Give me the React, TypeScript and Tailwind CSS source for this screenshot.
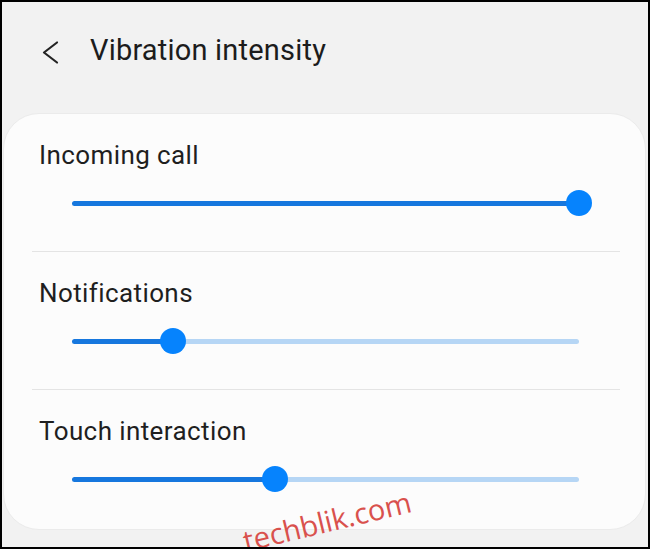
import React from 'react';

interface IntensityRow {
  label: string;
  value: number; // 0..5
}

const rows: IntensityRow[] = [
  { label: 'Incoming call', value: 5 },
  { label: 'Notifications', value: 1 },
  { label: 'Touch interaction', value: 2 },
];

// Track + thumb laid out in flow; the thumb overlaps the track with negative margins
const Slider: React.FC<{ value: number; max: number }> = ({ value, max }) => {
  const pct = (value / max) * 100;
  return (
    <div className="flex items-center ml-[68px] w-[507px] h-[28px]">
      <div className="h-[5px] rounded-l-full bg-[#1677de] shrink-0" style={{ width: `${pct}%` }} />
      <div className="relative z-10 w-[26px] h-[26px] -mx-[13px] shrink-0 rounded-full bg-[#0683fd]" />
      <div className="flex-1 h-[5px] rounded-r-full bg-[#b6d6f5]" />
    </div>
  );
};

export default function App() {
  return (
    <div
      className="relative w-[650px] h-[549px] overflow-hidden border-2 border-black bg-[#f2f2f2]"
      style={{ fontFamily: 'Roboto, "Noto Sans", sans-serif' }}
    >
      {/* Header */}
      <div className="flex items-center h-[34px] mt-[31px]">
        <svg width="20" height="25" viewBox="0 0 20 25" className="ml-[38px] mt-[5px] shrink-0">
          <path d="M17 2.5 L4 12.5 L17 22.5" fill="none" stroke="#232323" strokeWidth="2.2" strokeLinecap="round" strokeLinejoin="round" />
        </svg>
        <h1 className="ml-[30px] text-[29px] leading-[34px] tracking-[0.2px] text-[#1c1c1c] font-normal whitespace-nowrap">
          Vibration intensity
        </h1>
      </div>

      {/* Card */}
      <div className="mt-[46px] ml-px w-[643px] rounded-[36px] bg-[#fcfcfc] border border-[#ebebeb]">
        {rows.map((row, i) => (
          <div key={row.label}>
            {i > 0 && <div className="ml-[28px] w-[588px] h-px bg-[#e4e4e4]" />}
            <div className={i === rows.length - 1 ? 'pt-[25px] pb-[36px]' : 'pt-[25px] pb-[34px]'}>
              <div className="ml-[35px] text-[26px] leading-[32px] tracking-[0.4px] text-[#1f1f1f] whitespace-nowrap">
                {row.label}
              </div>
              <div className="mt-[18px]">
                <Slider value={row.value} max={5} />
              </div>
            </div>
          </div>
        ))}
      </div>

      {/* Watermark */}
      <div
        className="absolute left-[239px] top-[499px] w-[172px] h-[40px] leading-[40px] text-center text-[29px] text-[#d9514d] rotate-[-13.5deg] whitespace-nowrap"
        style={{ fontFamily: '"Open Sans", sans-serif' }}
      >
        techblik.com
      </div>
    </div>
  );
}
